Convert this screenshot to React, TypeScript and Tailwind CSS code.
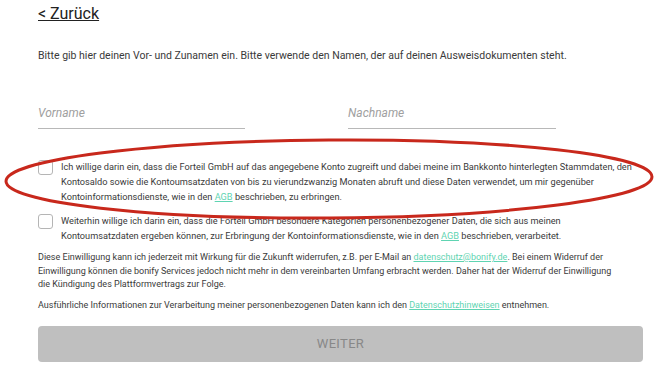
import { useState } from "react";

const Link = ({ children }: { children: React.ReactNode }) => (
  <a href="#" className="text-[#5fd4b2] underline">
    {children}
  </a>
);

const Check = ({ checked, onChange }: { checked: boolean; onChange: () => void }) => (
  <button
    type="button"
    onClick={onChange}
    className="mt-[1px] w-[15px] h-[15px] shrink-0 rounded-[3px] border border-[#b5b5b5] bg-white"
  >
    {checked && <span className="block w-full h-full bg-[#5fd4b2] rounded-[2px]" />}
  </button>
);

const App = () => {
  const [first, setFirst] = useState("");
  const [last, setLast] = useState("");
  const [c1, setC1] = useState(false);
  const [c2, setC2] = useState(false);

  return (
    <div
      className="relative w-[660px] h-[371px] bg-white overflow-hidden pl-[38px] pr-[17px] text-[#3a3a3a]"
      style={{ fontFamily: "Roboto, sans-serif" }}
    >
      <a href="#" className="block pt-[3px] text-[16px] leading-[22px] text-[#222] underline">
        &lt; Zurück
      </a>

      <p className="mt-[24px] text-[10.5px] leading-[14px]">
        Bitte gib hier deinen Vor- und Zunamen ein. Bitte verwende den Namen, der auf deinen Ausweisdokumenten steht.
      </p>

      <div className="mt-[41px] flex gap-[103px]">
        <input
          value={first}
          onChange={(e) => setFirst(e.currentTarget.value)}
          placeholder="Vorname"
          className="w-[207px] pb-[6px] border-b border-[#b8b8b8] text-[12px] italic placeholder:text-[#a0a0a0] outline-none"
        />
        <input
          value={last}
          onChange={(e) => setLast(e.currentTarget.value)}
          placeholder="Nachname"
          className="w-[208px] pb-[6px] border-b border-[#b8b8b8] text-[12px] italic placeholder:text-[#a0a0a0] outline-none"
        />
      </div>

      <div className="mt-[30px] flex gap-[8px] text-[9.2px] leading-[15px]">
        <Check checked={c1} onChange={() => setC1(!c1)} />
        <p>
          Ich willige darin ein, dass die Forteil GmbH auf das angegebene Konto zugreift und dabei meine im Bankkonto hinterlegten Stammdaten, den Kontosaldo sowie die Kontoumsatzdaten von bis zu vierundzwanzig Monaten abruft und diese Daten verwendet, um mir gegenüber{" "}
          <br />
          Kontoinformationsdienste, wie in den <Link>AGB</Link> beschrieben, zu erbringen.
        </p>
      </div>

      <div className="mt-[9px] flex gap-[8px] text-[9.2px] leading-[15px]">
        <Check checked={c2} onChange={() => setC2(!c2)} />
        <p>
          Weiterhin willige ich darin ein, dass die Forteil GmbH besondere Kategorien personenbezogener Daten, die sich aus meinen
          <br />
          Kontoumsatzdaten ergeben können, zur Erbringung der Kontoinformationsdienste, wie in den <Link>AGB</Link> beschrieben, verarbeitet.
        </p>
      </div>

      <p className="mt-[8px] pr-[20px] text-[9px] leading-[13.5px]">
        Diese Einwilligung kann ich jederzeit mit Wirkung für die Zukunft widerrufen, z.B. per E-Mail an <Link>datenschutz@bonify.de</Link>. Bei einem Widerruf der Einwilligung können die bonify Services jedoch nicht mehr in dem vereinbarten Umfang erbracht werden. Daher hat der Widerruf der Einwilligung die Kündigung des Plattformvertrags zur Folge.
      </p>

      <p className="mt-[7px] text-[9px] leading-[13.5px]">
        Ausführliche Informationen zur Verarbeitung meiner personenbezogenen Daten kann ich den <Link>Datenschutzhinweisen</Link> entnehmen.
      </p>

      <button
        type="button"
        className="mt-[14px] w-full h-[36px] rounded-[4px] bg-[#bfbfbf] text-[13px] text-[#888] tracking-wide"
      >
        WEITER
      </button>

      <svg className="absolute left-0 top-0 pointer-events-none" width="660" height="371">
        <ellipse cx="329" cy="179" rx="323" ry="39" fill="none" stroke="#c8281c" strokeWidth="3" transform="rotate(-0.4 329 179)" />
      </svg>
    </div>
  );
};

export default App;
